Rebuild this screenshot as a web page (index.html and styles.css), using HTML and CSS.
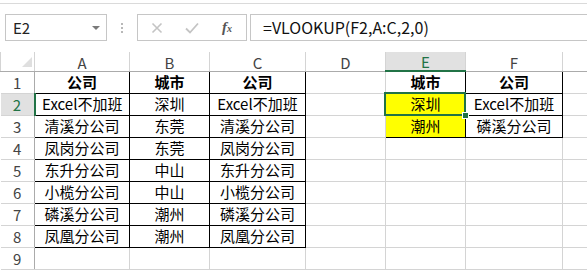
FILE: index.html
```html
<!DOCTYPE html>
<html lang="zh-CN">
<head>
  <meta charset="UTF-8">
  <title>VLOOKUP</title>
  <link rel="stylesheet" href="styles.css">
</head>
<body>

<div class="sheet">
  <div class="formula-bar">
    <div class="name-box">
      <span>E2</span>
      <span class="drop"></span>
    </div>
    <div class="grip">
      <span></span><span></span><span></span>
    </div>
    <div class="fx-box">
      <svg class="ico" width="12" height="12" viewBox="0 0 12 12"><path d="M1.5 1.5 L10.5 10.5 M10.5 1.5 L1.5 10.5" stroke="#c4c4c4" stroke-width="1.6" fill="none"/></svg>
      <svg class="ico" width="14" height="12" viewBox="0 0 14 12"><path d="M1 6.5 L5 10.5 L13 1.5" stroke="#c4c4c4" stroke-width="1.8" fill="none"/></svg>
      <span class="fx">f<sub>x</sub></span>
    </div>
    <div class="formula">=VLOOKUP(F2,A:C,2,0)</div>
  </div>

  <table class="grid">
    <colgroup>
      <col class="c-row">
      <col class="c-95">
      <col class="c-80">
      <col class="c-96">
      <col class="c-80">
      <col class="c-80">
      <col class="c-97">
      <col class="c-rest">
    </colgroup>
    <tr class="col-head">
      <th class="corner"><span class="tri"></span></th>
      <th>A</th><th>B</th><th>C</th><th>D</th><th class="on">E</th><th>F</th><th></th>
    </tr>
    <tr>
      <th class="row-head">1</th>
      <td class="b bold">公司</td><td class="b bold">城市</td><td class="b bold">公司</td>
      <td></td><td class="b bold">城市</td><td class="b bold">公司</td><td></td>
    </tr>
    <tr>
      <th class="row-head on">2</th>
      <td class="b">Excel不加班</td><td class="b">深圳</td><td class="b">Excel不加班</td>
      <td></td><td class="b yellow active">深圳</td><td class="b">Excel不加班</td><td></td>
    </tr>
    <tr>
      <th class="row-head">3</th>
      <td class="b">清溪分公司</td><td class="b">东莞</td><td class="b">清溪分公司</td>
      <td></td><td class="b yellow">潮州</td><td class="b">磷溪分公司</td><td></td>
    </tr>
    <tr>
      <th class="row-head">4</th>
      <td class="b">凤岗分公司</td><td class="b">东莞</td><td class="b">凤岗分公司</td>
      <td></td><td></td><td></td><td></td>
    </tr>
    <tr>
      <th class="row-head">5</th>
      <td class="b">东升分公司</td><td class="b">中山</td><td class="b">东升分公司</td>
      <td></td><td></td><td></td><td></td>
    </tr>
    <tr>
      <th class="row-head">6</th>
      <td class="b">小榄分公司</td><td class="b">中山</td><td class="b">小榄分公司</td>
      <td></td><td></td><td></td><td></td>
    </tr>
    <tr>
      <th class="row-head">7</th>
      <td class="b">磷溪分公司</td><td class="b">潮州</td><td class="b">磷溪分公司</td>
      <td></td><td></td><td></td><td></td>
    </tr>
    <tr>
      <th class="row-head">8</th>
      <td class="b">凤凰分公司</td><td class="b">潮州</td><td class="b">凤凰分公司</td>
      <td></td><td></td><td></td><td></td>
    </tr>
    <tr>
      <th class="row-head">9</th>
      <td></td><td></td><td></td><td></td><td></td><td></td><td></td>
    </tr>
  </table>
</div>

</body>
</html>
```

FILE: styles.css
```css
body {
  margin: 0;
  background: #fff;
  font-family: "Noto Sans CJK SC", "Noto Sans", sans-serif;
  color: #000;
  overflow: hidden;
}

.sheet {
  width: 587px;
  height: 271px;
  overflow: hidden;
}

/* formula bar */
.formula-bar {
  display: flex;
  align-items: stretch;
  margin-top: 3px;
  border-top: 1px solid #dadada;
  padding: 10px 0 11px 5px;
  height: 27px;
}

.name-box {
  width: 100px;
  border: 1px solid #c6c6c6;
  display: flex;
  align-items: center;
  justify-content: space-between;
  padding: 0 6px 0 7px;
  box-sizing: border-box;
  width: 102px;
  font-size: 15px;
  color: #222;
}

.drop {
  width: 0;
  height: 0;
  border-left: 4px solid transparent;
  border-right: 4px solid transparent;
  border-top: 4px solid #7a7a7a;
  margin-top: 1px;
}

.grip {
  width: 30px;
  display: flex;
  flex-direction: column;
  align-items: center;
  justify-content: center;
  gap: 2px;
}

.grip span {
  width: 2px;
  height: 2px;
  background: #b8b8b8;
}

.fx-box {
  width: 110px;
  box-sizing: border-box;
  border: 1px solid #c6c6c6;
  display: flex;
  align-items: center;
  padding-left: 13px;
  gap: 0;
}

.fx-box .ico:first-child {
  margin-right: 22px;
}

.fx {
  margin-left: 23px;
  font-family: "Liberation Serif", serif;
  font-style: italic;
  font-size: 15px;
  color: #555;
  font-weight: bold;
}

.fx sub {
  font-size: 10px;
  vertical-align: 0;
}

.formula {
  flex: 1;
  margin-left: 3px;
  border: 1px solid #c6c6c6;
  border-right: none;
  padding-left: 12px;
  font-size: 16px;
  line-height: 25px;
  color: #111;
  white-space: nowrap;
}

/* grid */
.grid {
  border-collapse: collapse;
  table-layout: fixed;
  width: 600px;
}

.c-row { width: 34px; }
.c-95 { width: 95px; }
.c-80 { width: 80px; }
.c-96 { width: 96px; }
.c-97 { width: 97px; }
.c-rest { width: 118px; }

.grid th,
.grid td {
  border: 1px solid #d4d4d4;
  padding: 0;
  text-align: center;
  white-space: nowrap;
  overflow: visible;
  font-size: 15px;
  font-weight: normal;
}

.grid tr {
  height: 22px;
}

.grid tr.col-head {
  height: 19px;
}

.col-head th {
  border-top: none;
  border-bottom-color: #ababab;
  color: #444;
  line-height: 17px;
  vertical-align: bottom;
}

.col-head th.on {
  background: #e1e1e1;
  color: #217346;
  border-bottom: 2px solid #217346;
}

.corner {
  position: relative;
}

.tri {
  position: absolute;
  right: 2px;
  bottom: 4px;
  width: 0;
  height: 0;
  border-left: 10px solid transparent;
  border-bottom: 10px solid #dfdfdf;
}

.row-head {
  color: #444;
  border-left: none !important;
  border-right-color: #ababab !important;
}

.row-head.on {
  background: #e1e1e1;
  color: #217346;
  border-right: 2px solid #217346 !important;
}

.grid td {
  line-height: 20px;
}

.grid td.b {
  border: 1px solid #000;
}

.bold {
  font-weight: bold !important;
}

.yellow {
  background: #ffff00;
}

.active {
  position: relative;
}

.active::after {
  content: "";
  position: absolute;
  left: -2px;
  top: -2px;
  right: -1px;
  bottom: -1px;
  border: 2px solid #217346;
}

.active::before {
  content: "";
  position: absolute;
  right: -4px;
  bottom: -4px;
  width: 5px;
  height: 5px;
  background: #217346;
  border: 1px solid #fff;
  z-index: 2;
}
```
